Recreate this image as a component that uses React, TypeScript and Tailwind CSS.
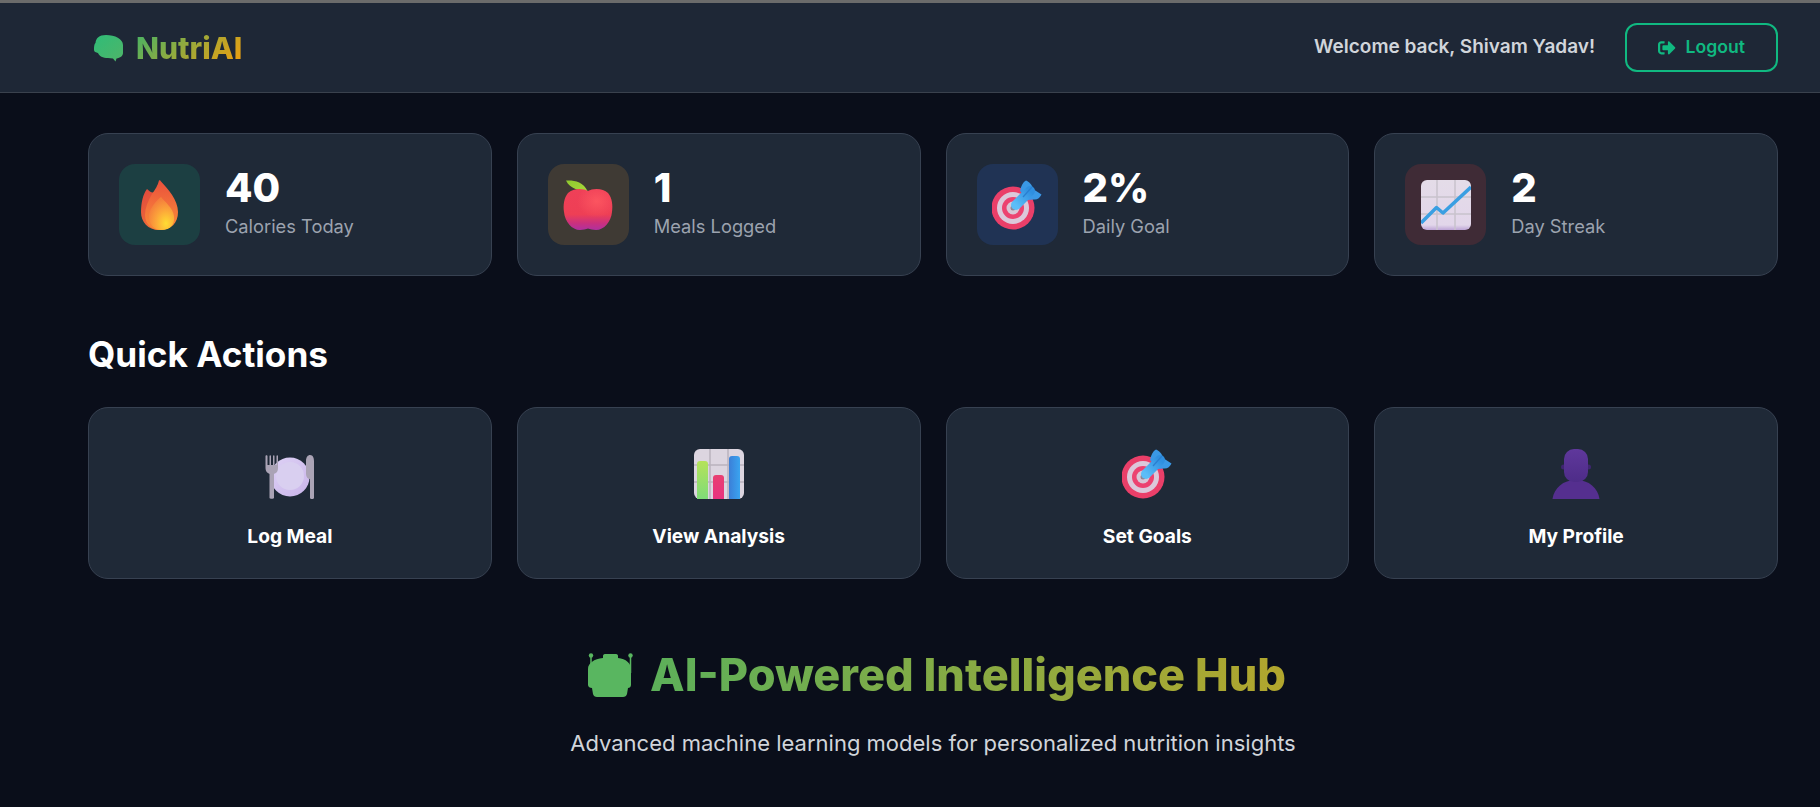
import type { ReactNode } from "react";
import { FaSignOutAlt } from "react-icons/fa";

function Flame() {
  return (
    <svg width="50" height="50" viewBox="0 0 50 50">
      <defs>
        <linearGradient id="fl1" x1="0.2" y1="0" x2="0.5" y2="1">
          <stop offset="0" stopColor="#e04a3c" />
          <stop offset="1" stopColor="#ef6f3a" />
        </linearGradient>
        <linearGradient id="fl2" x1="0.5" y1="0" x2="0.5" y2="1">
          <stop offset="0" stopColor="#e9503c" />
          <stop offset="0.6" stopColor="#f5763a" />
          <stop offset="1" stopColor="#f98a35" />
        </linearGradient>
        <radialGradient id="fl3" cx="0.68" cy="0.8" r="0.75">
          <stop offset="0" stopColor="#ffdc33" />
          <stop offset="0.55" stopColor="#fca53a" />
          <stop offset="1" stopColor="#f47f3c" />
        </radialGradient>
      </defs>
      <path d="M12 9C8 14 6 23 6 32C6 42 13 50 24 50L30 30L21 11C18 14 15 12 12 9Z" fill="url(#fl1)" />
      <path d="M24 0.500C23 5 20 10 17 14C13 21 10 28 10 35C10 44 17 50 25 50C36 50 43 43 43 32C43 20 33 9 26 1.500C25.500 0.500 24.500 0 24 0.500Z" fill="url(#fl2)" />
      <path d="M26 17C20 22 13 30 14 38C15 46 20 50 26 50C36 50 40 44 39 36C38 28 30 22 26 17Z" fill="url(#fl3)" />
    </svg>
  );
}

function Apple() {
  const body =
    "M25 11C20 8 10 8 5 13C1 18 0 25 1 32C2 42 9 50 17 50C20 50 23 49 25 48.500C27 49 30 50 33 50C41 50 48 42 49 32C50 25 49 18 45 13C40 8 30 8 25 11Z";
  return (
    <svg width="50" height="50" viewBox="0 0 50 50">
      <defs>
        <linearGradient id="ap1" x1="0" y1="0" x2="0" y2="1">
          <stop offset="0" stopColor="#ef4058" />
          <stop offset="0.62" stopColor="#ee3f55" />
          <stop offset="0.84" stopColor="#c9307f" />
          <stop offset="1" stopColor="#b0309f" />
        </linearGradient>
        <radialGradient id="ap2" cx="0.68" cy="0.3" r="0.4">
          <stop offset="0" stopColor="#ff5a62" stopOpacity="0.8" />
          <stop offset="1" stopColor="#ff5a62" stopOpacity="0" />
        </radialGradient>
        <linearGradient id="ap3" x1="0" y1="0" x2="1" y2="1">
          <stop offset="0" stopColor="#8fc92f" />
          <stop offset="1" stopColor="#a8d83a" />
        </linearGradient>
      </defs>
      <path d="M3 0.5C10 0 20 1 24.500 11C17 11 7 9 3 0.5Z" fill="url(#ap3)" />
      <path d={body} fill="url(#ap1)" />
      <path d={body} fill="url(#ap2)" />
    </svg>
  );
}

function Target() {
  return (
    <svg width="50" height="50" viewBox="0 0 50 50">
      <defs>
        <linearGradient id="ta1" x1="0" y1="1" x2="1" y2="0">
          <stop offset="0" stopColor="#5cbdf7" />
          <stop offset="1" stopColor="#2f8fe0" />
        </linearGradient>
      </defs>
      <circle cx="21" cy="28" r="21.500" fill="#ea3f69" />
      <circle cx="21" cy="28" r="16" fill="#dcc8da" />
      <circle cx="21" cy="28" r="11" fill="#ec4270" />
      <circle cx="21" cy="28" r="6.500" fill="#d9c6d6" />
      <circle cx="21" cy="28" r="2.500" fill="#8f8794" />
      <path d="M34 0.500C37 2 40 4 41 9L49.500 14.500C48 18 45 20 42 19.500L36 20L28 11C29 6 31 2 34 0.500Z" fill="#3a98e6" />
      <path d="M24 25L38 11" stroke="url(#ta1)" strokeWidth="10" strokeLinecap="round" fill="none" />
      <path d="M31 17L40 7" stroke="#2a7fd0" strokeWidth="1.200" />
    </svg>
  );
}

function ChartUp() {
  return (
    <svg width="50" height="50" viewBox="0 0 50 50">
      <defs>
        <linearGradient id="cu1" x1="0" y1="0" x2="0" y2="1">
          <stop offset="0" stopColor="#e4dce8" />
          <stop offset="0.9" stopColor="#e2d6ea" />
          <stop offset="1" stopColor="#bda5d6" />
        </linearGradient>
      </defs>
      <rect width="50" height="50" rx="6" fill="url(#cu1)" />
      <path d="M16 0V50M34 0V50M0 17H50M0 34H50" stroke="#c8c2cc" strokeWidth="1.500" />
      <path d="M0 43L15.500 27.500L22 33L50 7" stroke="#3a9fe2" strokeWidth="3.500" fill="none" strokeLinejoin="round" />
    </svg>
  );
}

function BarChart() {
  return (
    <svg width="50" height="50" viewBox="0 0 50 50">
      <defs>
        <linearGradient id="bc1" x1="0" y1="0" x2="0" y2="1">
          <stop offset="0" stopColor="#b5e25a" />
          <stop offset="1" stopColor="#7fdc78" />
        </linearGradient>
        <linearGradient id="bc2" x1="0" y1="0" x2="0" y2="1">
          <stop offset="0" stopColor="#e83f72" />
          <stop offset="1" stopColor="#e8327f" />
        </linearGradient>
        <linearGradient id="bc3" x1="0" y1="0" x2="1" y2="0">
          <stop offset="0" stopColor="#3b7fd8" />
          <stop offset="1" stopColor="#3aa4f0" />
        </linearGradient>
      </defs>
      <rect width="50" height="50" rx="6" fill="#dcd5e0" />
      <path d="M16 0V50M34 0V50M0 16H50M0 33H50" stroke="#b9b3bd" strokeWidth="1.500" />
      <path d="M3 50V15C3 13 4 12 6 12H11C13 12 14 13 14 15V50Z" fill="url(#bc1)" />
      <path d="M19 50V29C19 27 20 26 22 26H27C29 26 30 27 30 29V50Z" fill="url(#bc2)" />
      <path d="M35 50V10C35 8 36 7 38 7H43C45 7 46 8 46 10V50Z" fill="url(#bc3)" />
    </svg>
  );
}

function Plate() {
  return (
    <svg width="50" height="50" viewBox="0 -6 50 50">
      <defs>
        <linearGradient id="pl1" x1="0" y1="0" x2="1" y2="1">
          <stop offset="0" stopColor="#ded2f5" />
          <stop offset="1" stopColor="#c9b4ea" />
        </linearGradient>
      </defs>
      <circle cx="25" cy="22" r="19.500" fill="url(#pl1)" />
      <circle cx="25" cy="21" r="14" fill="#d9cff0" />
      <path d="M0.500 1V13C0.500 17 3 18 4.500 19V43C4.500 44 9 44 9 43V19C11 18 13 17 13 13V1C13 0 11.500 0 11.500 1V10H9.500V1C9.500 0 8 0 8 1V10H6V1C6 0 4.500 0 4.500 1V10H2.500V1C2.500 0 0.500 0 0.500 1Z" fill="#aaa3b5" />
      <path d="M41 6C41 2 43 0 45 0C48 0 49 3 49 6V43C49 44.500 45 44.500 45 43V24C43 24 41 22 41 19Z" fill="#aaa3b5" />
    </svg>
  );
}

function Person() {
  return (
    <svg width="50" height="50" viewBox="0 0 50 50">
      <defs>
        <linearGradient id="pe1" x1="0" y1="0" x2="0" y2="1">
          <stop offset="0" stopColor="#5f389c" />
          <stop offset="1" stopColor="#4e2c88" />
        </linearGradient>
      </defs>
      <path d="M1.500 50C3 39 12 31 25 31C38 31 47 39 48.500 50Z" fill="#552f8f" />
      <circle cx="12.500" cy="18" r="2.500" fill="#3f2570" />
      <circle cx="37.500" cy="18" r="2.500" fill="#3f2570" />
      <rect x="13" y="0" width="24" height="33" rx="10" fill="url(#pe1)" />
    </svg>
  );
}

function Brain() {
  return (
    <svg width="29" height="27" viewBox="0 0 29 27" className="shrink-0">
      <defs>
        <linearGradient id="br1" x1="0" y1="0" x2="1" y2="1">
          <stop offset="0" stopColor="#2fbc78" />
          <stop offset="1" stopColor="#4fb568" />
        </linearGradient>
      </defs>
      <path d="M12 0C5 0 2 3 1.500 8C0 9 0 13 0 15C0 17 2 17.500 4 18C5 21 9 23 14 23L19 23.500L21.500 26.500L22.500 23.500C26 23 29 21 29 18V10C29 4 21 0 12 0Z" fill="url(#br1)" />
    </svg>
  );
}

function Robot() {
  return (
    <svg width="46" height="44" viewBox="0 0 46 44" className="shrink-0">
      <path d="M3 3V20M42.500 3V20" stroke="#59b660" strokeWidth="1.500" />
      <circle cx="3" cy="2.500" r="2.200" fill="#59b660" />
      <circle cx="42.500" cy="2.500" r="2.200" fill="#59b660" />
      <path d="M15 3C15 1.500 16 1 18 1H27C29 1 30 1.500 30 3V5C38 6 43 10 43 16V32C43 34 41.500 35 40 35L39 41C38.500 43 37 44 35 44H9C7 44 5.500 43 5 41L4 35C2 35 0 34 0 32V16C0 10 6 6 15 5Z" fill="#59b660" />
    </svg>
  );
}

const stats = [
  { value: "40", label: "Calories Today", tint: "bg-[#1c3f42]", icon: <Flame /> },
  { value: "1", label: "Meals Logged", tint: "bg-[#3f3a34]", icon: <Apple /> },
  { value: "2%", label: "Daily Goal", tint: "bg-[#203354]", icon: <Target /> },
  { value: "2", label: "Day Streak", tint: "bg-[#3f2b36]", icon: <ChartUp /> },
];

const actions: { label: string; icon: ReactNode }[] = [
  { label: "Log Meal", icon: <Plate /> },
  { label: "View Analysis", icon: <BarChart /> },
  { label: "Set Goals", icon: <Target /> },
  { label: "My Profile", icon: <Person /> },
];

export default function App() {
  return (
    <div className="h-[807px] overflow-hidden bg-[#0a0e1a] font-['Inter',sans-serif] text-white">
      <div className="h-[3px] bg-[#6b6b6b]" />
      <header className="flex h-[90px] items-center justify-between border-b border-[#3a414d] bg-[#1e2736] pl-[94px] pr-[42px]">
        <div className="mt-[2px] flex items-center gap-[13px] bg-[linear-gradient(135deg,#10b981,#f59e0b)] bg-clip-text">
          <Brain />
          <span className="text-[30px] font-extrabold leading-[35px] text-transparent">NutriAI</span>
        </div>
        <div className="flex items-center gap-[30px]">
          <span className="text-[19px] font-semibold text-[#d1d5db]">Welcome back, Shivam Yadav!</span>
          <button className="flex h-[49px] w-[153px] items-center justify-center gap-[10px] rounded-xl border-2 border-[#10b981] text-[17.600px] font-semibold text-[#10b981]">
            <FaSignOutAlt className="text-[17.600px]" />
            Logout
          </button>
        </div>
      </header>

      <main className="pl-[88px] pr-[42px] pt-[40px]">
        <div className="grid grid-cols-4 gap-[25px]">
          {stats.map((s) => (
            <div key={s.label} className="flex items-start gap-[25px] rounded-[20px] border border-[#374151] bg-[#1f2937] p-[30px]">
              <div className={`flex h-[81px] w-[81px] shrink-0 items-center justify-center rounded-2xl ${s.tint}`}>{s.icon}</div>
              <div>
                <div className="text-[40px] font-extrabold leading-[48px] text-white">{s.value}</div>
                <div className="mt-[4px] text-[18.300px] leading-[21px] text-[#9ca3af]">{s.label}</div>
              </div>
            </div>
          ))}
        </div>

        <h2 className="mb-[31px] mt-[57px] text-[35.200px] font-bold leading-[43px] text-white">Quick Actions</h2>

        <div className="grid grid-cols-4 gap-[25px]">
          {actions.map((a) => (
            <div key={a.label} className="flex flex-col items-center rounded-[20px] border border-[#374151] bg-[#1f2937] pb-[30px] pt-[41px]">
              {a.icon}
              <div className="mt-[26px] text-[19.200px] font-bold leading-[23px] text-white">{a.label}</div>
            </div>
          ))}
        </div>

        <div className="mt-[69px] text-center">
          <h2 className="flex items-center justify-center gap-[16px] bg-[linear-gradient(90deg,#10b981,#f59e0b)] bg-clip-text pl-[8px] text-[45px] font-extrabold leading-[54px] text-transparent">
            <Robot />
            <span>AI-Powered Intelligence Hub</span>
          </h2>
          <p className="mt-[28px] text-[22px] leading-[27px] text-[#d1d5db]">Advanced machine learning models for personalized nutrition insights</p>
        </div>
      </main>
    </div>
  );
}
